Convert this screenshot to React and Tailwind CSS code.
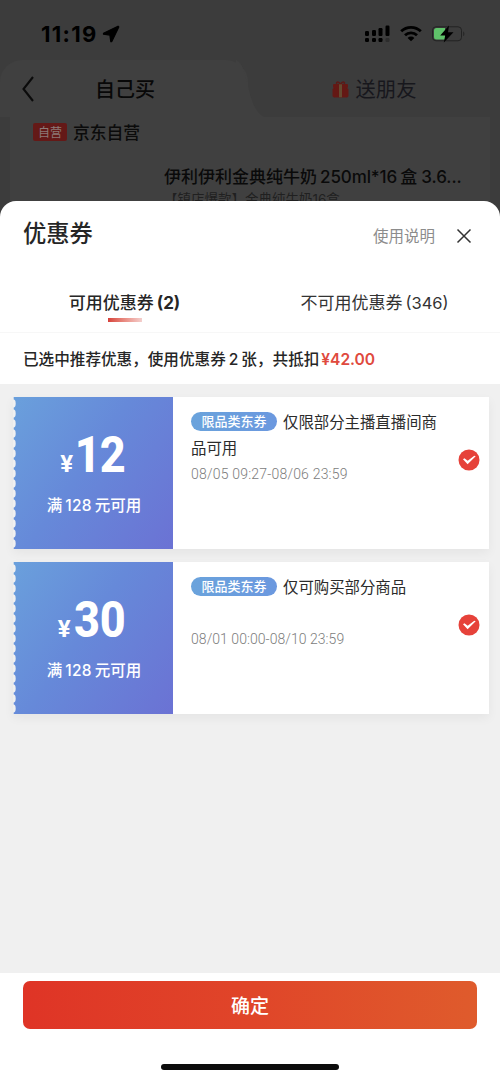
import React, { useState } from "react";

const coupons = [
  {
    id: 1,
    amount: "12",
    title: "仅限部分主播直播间商品可用",
    date: "08/05 09:27-08/06 23:59",
    amountClass: "pl-[2px] tracking-[-1px]",
    dateClass: "mt-0 tracking-[0.2px]",
  },
  {
    id: 2,
    amount: "30",
    title: "仅可购买部分商品",
    date: "08/01 00:00-08/10 23:59",
    amountClass: "tracking-normal",
    dateClass: "mt-[26px] tracking-[0.05px]",
  },
];

const StatusBar = () => (
  <div className="flex h-[60px] items-center justify-between pl-[41px] pr-[34px] pt-[7px]">
    <div className="flex items-center gap-[6px]">
      <span className="text-[22px] font-bold leading-6 tracking-[1.3px] text-black">11:19</span>
      <svg className="-ml-[2px]" width="18" height="18" viewBox="0 0 18 18">
        <path
          d="M16 1.2 1.5 8.2v1l6.4.9.9 6.5h1L16.8 2z"
          fill="#000"
          stroke="#000"
          strokeWidth="1.2"
          strokeLinejoin="round"
        />
      </svg>
    </div>
    <div className="flex items-center gap-[9px]">
      <svg width="27" height="18" viewBox="0 0 27 18">
        <g fill="#000">
          <rect x="1" y="6" width="4" height="5" rx="1.2" />
          <rect x="8" y="5" width="4" height="6" rx="1.2" />
          <rect x="14.5" y="3" width="4" height="8" rx="1.2" />
          <rect x="21.5" y="0.5" width="4" height="10.5" rx="1.2" />
          <rect x="1" y="13" width="4" height="4" rx="1.2" />
          <rect x="8" y="13" width="4" height="4" rx="1.2" />
          <rect x="14.5" y="13" width="4" height="4" rx="1.2" />
          <rect x="21.5" y="13" width="4" height="4" rx="1.2" opacity="0.25" />
        </g>
      </svg>
      <svg width="22" height="17" viewBox="0 0 22 17">
        <g fill="none" stroke="#000" strokeWidth="2.8">
          <path d="M1.2 6.3a14 14 0 0 1 19.6 0" />
          <path d="M5 10.3a8.6 8.6 0 0 1 12 0" />
        </g>
        <path d="M11 16.3 7.6 13a4.8 4.8 0 0 1 6.8 0z" fill="#000" />
      </svg>
      <svg width="35" height="18" viewBox="0 0 35 18">
        <rect x="1.5" y="1.8" width="29" height="14" rx="3.5" fill="none" stroke="#222" strokeWidth="1" />
        <path d="M5.5 3H14v11.6H5.5A2.5 2.5 0 0 1 3 12.1V5.5A2.5 2.5 0 0 1 5.5 3z" fill="#5fc26a" />
        <path d="M32.2 6.5c1.6.6 1.6 4 0 4.6z" fill="#252525" />
        <path d="M18 .5 9.2 10.4h5L12.8 17.5l9.7-10.2h-5.5z" fill="#000" />
      </svg>
    </div>
  </div>
);

const GiftIcon = () => (
  <svg width="17" height="18" viewBox="0 0 17 18">
    <path d="M5 4.5C3.5 2 5.6.8 8.5 4 11.4.8 13.5 2 12 4.5" fill="none" stroke="#5c1a17" strokeWidth="1.4" />
    <rect x="1" y="4" width="15" height="4" rx="1" fill="#641814" />
    <rect x="0.5" y="8" width="16" height="9.5" rx="1.8" fill="#641814" />
    <rect x="7" y="4.3" width="3" height="13" fill="#634a30" />
  </svg>
);

const Background = () => (
  <div className="h-[201px] overflow-hidden">
    <StatusBar />
    <div className="flex h-[57px]">
      <div className="relative flex w-[248px] items-center rounded-t-[22px] bg-[#404040] pl-[21px]">
        <svg width="14" height="28" viewBox="0 0 14 28">
          <path d="M12 2 2.5 14 12 26" fill="none" stroke="#0b0b0b" strokeWidth="2.1" />
        </svg>
        <span className="ml-[60px] pt-[2px] text-[20px] font-medium leading-7 text-[#080808]">自己买</span>
        <svg className="absolute -right-[16px] bottom-0" width="28" height="57" viewBox="0 0 28 57">
          <path d="M0 0C13 4 10 48 28 57H0z" fill="#404040" />
        </svg>
      </div>
      <div className="flex flex-1 items-center justify-center gap-[7px]">
        <GiftIcon />
        <span className="pt-[2px] text-[20.3px] leading-7 text-[#17171c]">送朋友</span>
      </div>
    </div>
    <div className="h-[84px] bg-[#3c3c3c] px-[10px]">
      <div className="h-full bg-[#404040] pl-[23px] pt-[2px]">
        <div className="flex h-[26px] items-center">
          <span className="flex h-[18px] w-[34px] items-center justify-center rounded-[2px] bg-[#641917] pt-px text-[12px] leading-none text-[#8d7b78]">
            自营
          </span>
          <span className="ml-[6px] pt-[3px] text-[16.8px] font-medium text-[#0b0b0b]">京东自营</span>
        </div>
        <div className="ml-[131px] mt-[19px] whitespace-nowrap">
          <p className="flex h-[26px] items-center pt-[2px] text-[17px] font-medium text-[#0a0a0a]">
            <span>伊利伊利金典纯牛奶</span>
            <span className="ml-[3px] tracking-[-0.1px]">250ml*16</span>
            <span className="ml-[3px]">盒</span>
            <span className="ml-[4px]">3.6...</span>
          </p>
          <p className="text-[13.5px] leading-[18px] text-[#202020]">【镇店爆款】金典纯牛奶16盒</p>
        </div>
      </div>
    </div>
  </div>
);

const CheckIcon = () => (
  <svg width="22" height="22" viewBox="0 0 22 22">
    <circle cx="11" cy="11" r="10.5" fill="#e6423a" />
    <path d="M5 10.2 9.6 15.2 17.7 7.2 16.3 6.7 9.7 11.8 6.4 9.3z" fill="#fff" />
  </svg>
);

// row of small half circles cut out of the left edge
const Perforation = () => (
  <svg className="absolute left-0 top-0" width="4" height="152" viewBox="0 0 4 152">
    <rect width="0.7" height="152" fill="#f0f0f0" />
    {Array.from({ length: 15 }, (_, i) => (
      <ellipse key={i} cx="0.5" cy={6.5 + i * 10} rx="2.2" ry="4" fill="#f0f0f0" />
    ))}
  </svg>
);

const Coupon = ({ coupon, checked, onToggle }) => (
  <div className="flex h-[152px] bg-white shadow-[0_4px_10px_rgba(0,0,0,0.05)]">
    <div className="relative flex w-[160px] flex-col items-center bg-linear-[125deg,#6aa0dc_0%,#6689d9_45%,#6b72d4_100%] text-white">
      <Perforation />
      <div className={`${coupon.amountClass} mt-[30px] flex h-[56px] items-baseline justify-center font-['Roboto','Noto_Sans_CJK_SC',sans-serif]`}>
        <span className="text-[24px] font-bold leading-[56px]">¥</span>
        <span className="scale-x-[0.9] text-[50px] font-extrabold leading-[56px]">{coupon.amount}</span>
      </div>
      <p className="mt-[11px] flex h-6 items-center pl-[2px] text-[15.5px] font-medium">
        <span>满</span>
        <span className="mx-[3px] tracking-[0.3px]">128</span>
        <span>元可用</span>
      </p>
    </div>
    <div className="w-[270px] pl-[18px] pt-[13px]">
      <p className="text-[15.4px] leading-[26px] text-[#2b2b2b]">
        <span className="relative -top-[2px] mr-[6px] inline-flex h-[19px] w-[86px] items-center justify-center rounded-full bg-linear-to-r from-[#6aa3dc] to-[#6b98df] align-middle text-[13px] font-medium leading-none text-white">
          限品类东券
        </span>
        {coupon.title}
      </p>
      <p className={`${coupon.dateClass} -translate-y-px whitespace-nowrap text-[14px] font-light leading-[26px] text-[#7c7c7c] font-['Roboto',sans-serif]`}>
        {coupon.date}
      </p>
    </div>
    <button className="ml-auto flex h-[126px] w-[31px] items-center" onClick={onToggle}>
      {checked ? <CheckIcon /> : <span className="h-[21px] w-[21px] rounded-full border border-gray-300" />}
    </button>
  </div>
);

const App = () => {
  const [selected, setSelected] = useState([1, 2]);

  const toggle = (id) => {
    setSelected((prev) => (prev.includes(id) ? prev.filter((x) => x !== id) : [...prev, id]));
  };

  return (
    <div className="flex h-[1081px] w-[500px] flex-col overflow-hidden bg-[#3c3c3c] font-['Inter','Noto_Sans_CJK_SC',sans-serif]">
      <Background />
      <div className="flex flex-1 flex-col overflow-hidden rounded-t-[16px] bg-white">
        <div className="flex h-[68px] items-center pl-[23px] pr-[28px]">
          <h1 className="pb-[2px] text-[23.3px] font-medium leading-8 text-[#262626]">优惠券</h1>
          <span className="ml-auto pt-[3px] text-[15.5px] text-[#8c8c8c]">使用说明</span>
          <svg className="ml-[21px] mt-px" width="16" height="16" viewBox="0 0 16 16">
            <path d="M1.5 1.5 14.5 14.5M14.5 1.5 1.5 14.5" stroke="#333" strokeWidth="1.5" />
          </svg>
        </div>

        <div className="flex h-[64px] border-b border-[#f7f7f7] pt-[20px] text-[17px] leading-7 text-[#262626]">
          <div className="flex w-[249px] flex-col items-center">
            <p className="flex font-medium">
              可用优惠券<span className="ml-[3px] font-bold">(2)</span>
            </p>
            <span className="mt-px h-[4px] w-[34px] bg-linear-to-r from-[#d6403a] to-[#f3cfcd]" />
          </div>
          <div className="flex flex-1 justify-center">
            <p className="flex text-[#333]">
              不可用优惠券<span className="ml-[3px] text-[16.5px]">(346)</span>
            </p>
          </div>
        </div>

        <p className="flex h-[51px] items-center pl-[23px] pt-[2px] text-[15.6px] font-medium text-[#262626]">
          已选中推荐优惠，使用优惠券<span className="mx-[3px]">2</span>张，共抵扣
          <span className="ml-[2px] font-semibold tracking-[-0.05px] text-[#df4a3e]">¥42.00</span>
        </p>

        <div className="flex flex-1 flex-col gap-[13px] bg-[#f0f0f0] pl-[13px] pr-[11px] pt-[13px]">
          {coupons.map((coupon) => (
            <Coupon
              key={coupon.id}
              coupon={coupon}
              checked={selected.includes(coupon.id)}
              onToggle={() => toggle(coupon.id)}
            />
          ))}
        </div>

        <div className="flex h-[108px] flex-col items-center bg-white px-[23px] pt-[8px]">
          <button className="h-[48px] w-full rounded-[7px] bg-linear-to-r from-[#df3426] via-[#e04529] to-[#df5b2c] pt-[4px] text-[19px] font-medium text-white">
            确定
          </button>
          <div className="mt-[35px] h-[6px] w-[178px] rounded-full bg-[#0c0c0c]" />
        </div>
      </div>
    </div>
  );
};

export default App;
